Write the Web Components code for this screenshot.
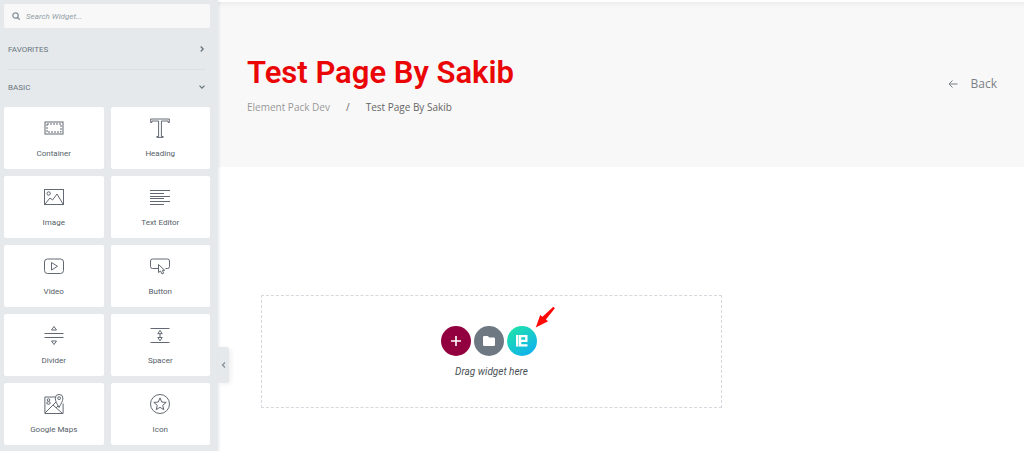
<!DOCTYPE html>
<html lang="en">
<head>
<meta charset="utf-8">
<title>Test Page By Sakib</title>
<style>
  html, body { margin: 0; min-height: 100%; background: #fff; }
  body { font-family: Roboto, "Liberation Sans", sans-serif; font-size: 8px; color: #556068; }
</style>
</head>
<body>
<editor-app></editor-app>
<script>
const icons = {
  container: '<rect x="1" y="4" width="18" height="12"/><rect x="3" y="6" width="14" height="8" stroke-dasharray="2 1"/>',
  heading: '<path d="M.7 1h18.600v3.500h-1.200V3H11.400v15.500h1.800v.9H6.800v-.9h1.800V3H1.900v1.500H.7z"/>',
  image: '<rect x=".5" y="2.500" width="19" height="15"/><circle cx="4.700" cy="6.500" r="1.700"/><path d="M1 17l5-6 2.500 2 4.500-6 6 10"/>',
  text: '<path d="M0 3.500h20M0 6.500h14M0 9.500h20M0 11.500h14M0 14.500h20M0 17.500h14"/>',
  video: '<rect x=".5" y="3" width="19" height="14.500" rx="3"/><path d="M7.500 6.500v7.500l6-3.700z"/>',
  button: '<path d="M8 12.500H2.500a2 2 0 0 1-2-2V5a2 2 0 0 1 2-2h15a2 2 0 0 1 2 2v5.500a2 2 0 0 1-2 2h-2"/><path d="M8.500 8.500v8l2-1.500 1.500 3 1.700-.8-1.300-2.900h2.300z"/>',
  divider: '<path d="M.5 8.500h19M.5 12.500h19M7.500 5h5L10 1.500zM7.500 16h5L10 19.500z"/>',
  spacer: '<path d="M.5 3.500h19M.5 17.500h19M10 8v5M7.800 8.700h4.400L10 5.300zM7.800 12.500h4.400L10 15.800z"/>',
  maps: '<path d="M11.500 3H.9v16.500h18.200V9.500M1 19l8-8 9.500 8.500M9 11l4-4M12 14l2-2"/><path d="M15 13.500c-2-4-3.700-6-3.700-9.300a3.800 3.800 0 0 1 7.600 0c0 3.300-1.900 5.300-3.900 9.300z" fill="#fff"/><circle cx="15.100" cy="4.200" r="1.400"/><circle cx="4.500" cy="6" r="1.300"/><ellipse cx="4.500" cy="9" rx="1.700" ry="1.300"/>',
  star: '<circle cx="10" cy="10" r="9.500"/><path d="M10 3.900l1.700 4.200 4.500.3-3.500 2.900 1.100 4.400-3.800-2.400-3.800 2.400 1.100-4.400-3.500-2.900 4.500-.3z"/>'
};

const define = (name, html, ready) => customElements.define(name, class extends HTMLElement {
  constructor() {
    super();
    this.attachShadow({ mode: 'open' }).innerHTML = html;
  }
  connectedCallback() { if (ready) ready(this, this.shadowRoot); }
});

define('widget-tile', `
<style>
  :host { display: block; }
  button { box-sizing: border-box; width: 100%; height: 62px; margin: 0; border: 0; border-radius: 2px; background: #fff; color: inherit; font: inherit; line-height: 10px; padding: 11px 0 10px; display: flex; flex-direction: column; align-items: center; justify-content: space-between; cursor: grab; }
  svg { width: 20px; height: 20px; fill: none; stroke: #626972; stroke-width: 1; overflow: visible; }
</style>
<button type="button"><svg viewBox="0 0 20 20" aria-hidden="true"></svg><span><slot></slot></span></button>`,
(host, root) => { root.querySelector('svg').innerHTML = icons[host.getAttribute('icon')]; });

define('widget-search', `
<style>
  :host { display: block; }
  label { display: flex; align-items: center; gap: 6px; height: 24px; padding: 0 8px; background: #f8f8f8; border-radius: 2px; }
  svg { width: 8px; height: 8px; fill: none; stroke: #87929b; stroke-width: 1.3; }
  input { flex: 1; min-width: 0; padding: 0; border: 0; outline: 0; background: none; font: italic 8px Roboto, "Liberation Sans", sans-serif; color: #556068; }
  input::placeholder { color: #939ea7; opacity: 1; }
</style>
<label><svg viewBox="0 0 8 8" aria-hidden="true"><circle cx="3.500" cy="3.500" r="2.700"/><path d="M5.500 5.500l2.200 2.200"/></svg><input type="search" placeholder="Search Widget..." aria-label="Search Widget"></label>`);

define('category-heading', `
<style>
  :host { display: block; }
  button { width: 100%; height: 38px; padding: 0 4px; margin: 0; border: 0; background: none; display: flex; align-items: center; justify-content: space-between; font: inherit; color: #6a757d; }
  svg { width: 8px; height: 8px; fill: none; stroke: #65717a; stroke-width: 1.2; }
  :host([open]) svg { transform: rotate(90deg); }
</style>
<button type="button"><span><slot></slot></span><svg viewBox="0 0 8 8" aria-hidden="true"><path d="M2.700 1.500L5.200 4 2.700 6.500"/></svg></button>`,
(host, root) => root.querySelector('button').setAttribute('aria-expanded', host.hasAttribute('open')));

define('widget-panel', `
<style>
  :host { display: block; box-sizing: border-box; position: relative; z-index: 1; padding: 4px 8px 6px 4px; background: #e5e9ec; box-shadow: 0 0 4px #0002; }
  widget-search { margin-bottom: 2px; }
  hr { margin: 1px 4px -2px; border: 0; height: 1px; background: #dce0e3; }
  .grid { display: grid; grid-template-columns: 1fr 1fr; gap: 7px; margin-top: 1px; }
  .fold { position: absolute; left: 100%; top: 347px; width: 11px; height: 36px; padding: 0; border: 0; border-radius: 0 3px 3px 0; background: #e5e9ec; box-shadow: 2px 1px 4px #0001; display: grid; place-items: center; }
  .fold svg { width: 8px; height: 8px; fill: none; stroke: #87929b; stroke-width: 1.3; }
</style>
<widget-search></widget-search>
<category-heading>FAVORITES</category-heading>
<hr>
<category-heading open>BASIC</category-heading>
<div class="grid">
  <widget-tile icon="container">Container</widget-tile>
  <widget-tile icon="heading">Heading</widget-tile>
  <widget-tile icon="image">Image</widget-tile>
  <widget-tile icon="text">Text Editor</widget-tile>
  <widget-tile icon="video">Video</widget-tile>
  <widget-tile icon="button">Button</widget-tile>
  <widget-tile icon="divider">Divider</widget-tile>
  <widget-tile icon="spacer">Spacer</widget-tile>
  <widget-tile icon="maps">Google Maps</widget-tile>
  <widget-tile icon="star">Icon</widget-tile>
</div>
<button class="fold" type="button" aria-label="Hide panel"><svg viewBox="0 0 8 8"><path d="M5 1.500L2.500 4 5 6.500"/></svg></button>`);

define('page-banner', `
<style>
  :host { display: flex; align-items: center; justify-content: space-between; box-sizing: border-box; min-height: 167px; padding: 0 27px 2px 29px; border-top: 2px solid #fff; background: linear-gradient(#ededed, #f8f8f8 6px); font-family: "Open Sans", "Liberation Sans", sans-serif; }
  h1 { margin: 0; font: 600 31px/40px Roboto, "Liberation Sans", sans-serif; color: #ea0606; }
  nav { display: flex; gap: 16px; margin-top: 6px; font-size: 10px; line-height: 16px; color: #666; }
  a { color: #999; text-decoration: none; }
  .back { display: flex; align-items: center; gap: 13px; font-size: 12px; line-height: 16px; color: #7b8085; }
  .back svg { width: 10px; height: 8px; fill: none; stroke: currentColor; }
</style>
<div>
  <h1>Test Page By Sakib</h1>
  <nav aria-label="Breadcrumb"><a href="#">Element Pack Dev</a><span>/</span><span>Test Page By Sakib</span></nav>
</div>
<a class="back" href="#"><svg viewBox="0 0 10 8" aria-hidden="true"><path d="M9.500 4H1M4.500.5L1 4l3.500 3.500"/></svg>Back</a>`);

define('drop-area', `
<style>
  :host { display: flex; flex-direction: column; align-items: center; box-sizing: border-box; width: 57.2%; min-height: 113px; padding: 30px 0 28px; border: 1px dashed #d5d8dc; }
  .row { display: flex; gap: 3px; position: relative; margin-right: 5px; }
  button { width: 30px; height: 30px; padding: 0; border: 0; border-radius: 50%; display: grid; place-items: center; background: #93003f; }
  .folder { background: #6d7882; }
  .pack { background: linear-gradient(145deg, #1fe2ac 10%, #0fb0ed 90%); }
  button svg { width: 12px; height: 12px; fill: #fff; }
  .arrow { position: absolute; left: 94px; top: -20px; width: 20px; height: 22px; fill: #fe0808; }
  p { margin: 10px 0 0; font: italic 10px/12px Roboto, "Liberation Sans", sans-serif; color: #495157; }
</style>
<div class="row">
  <button type="button" aria-label="Add container"><svg viewBox="0 0 12 12"><path d="M5.200 1h1.600v4.200H11v1.600H6.800V11H5.200V6.800H1V5.200h4.200z"/></svg></button>
  <button class="folder" type="button" aria-label="Open library"><svg viewBox="0 0 12 12"><path d="M1.300 1h3.500l1.500 1.500h4.400a1.300 1.300 0 0 1 1.300 1.300v5.900a1.300 1.300 0 0 1-1.300 1.300H1.300A1.300 1.300 0 0 1 0 9.700V2.300A1.300 1.300 0 0 1 1.300 1z"/></svg></button>
  <button class="pack" type="button" aria-label="Element Pack library"><svg viewBox="0 0 12 12"><path fill-rule="evenodd" d="M0 0h2.300v11.500H0zM2.800 0h8.700v7H5.300v2.300h6.200v2.200H2.800zM5.300 2.200v2.600h3.900V2.200z"/></svg></button>
  <svg class="arrow" viewBox="0 0 20 22" aria-hidden="true"><path d="M18.300.8l1.600 1.500-9 11.200 2.200 1.800L.8 21.500 5.200 9l2.300 1.700z"/></svg>
</div>
<p>Drag widget here</p>`);

define('editor-app', `
<style>
  :host { display: grid; grid-template-columns: 218px minmax(0, 1fr); min-height: 100vh; }
  main { min-width: 0; }
  drop-area { margin: 128px 0 40px 43px; }
</style>
<widget-panel></widget-panel>
<main><page-banner></page-banner><drop-area></drop-area></main>`);
</script>
</body>
</html>
